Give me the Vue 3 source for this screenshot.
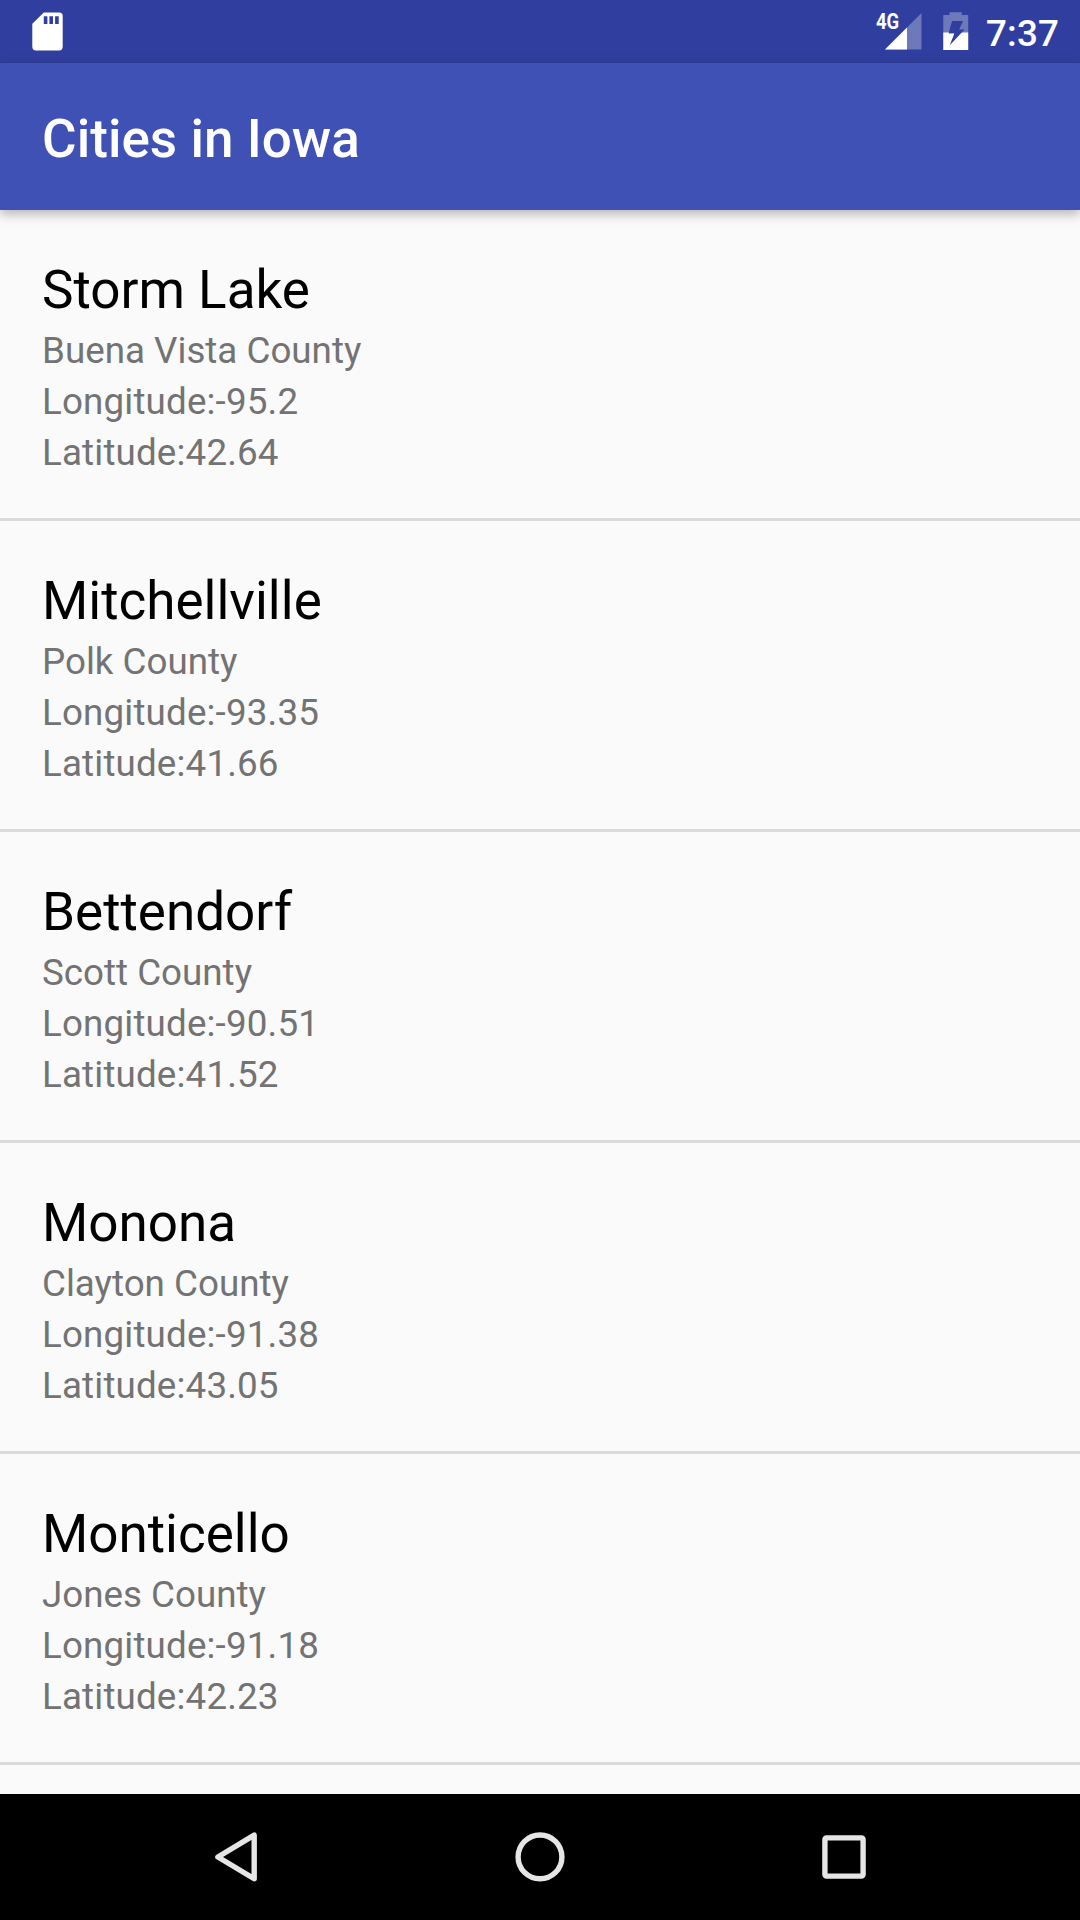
<script setup>
const cities = [
  { name: 'Storm Lake', county: 'Buena Vista County', lon: '-95.2', lat: '42.64' },
  { name: 'Mitchellville', county: 'Polk County', lon: '-93.35', lat: '41.66' },
  { name: 'Bettendorf', county: 'Scott County', lon: '-90.51', lat: '41.52' },
  { name: 'Monona', county: 'Clayton County', lon: '-91.38', lat: '43.05' },
  { name: 'Monticello', county: 'Jones County', lon: '-91.18', lat: '42.23' },
]
</script>

<template>
  <div class="screen">
    <div class="status">
      <svg class="sd" width="32" height="40" viewBox="0 0 32 40">
        <path
          fill="#fff"
          fill-rule="evenodd"
          d="M11.8 .4H27.1Q30.7 .4 30.7 4V34.7Q30.7 38.4 27.1 38.4H4Q.3 38.4 .3 34.7V11.7ZM11.8 4.3V12H15.4V4.3ZM17.4 4.3V12H21V4.3ZM23.1 4.3V12H26.7V4.3Z"
        />
      </svg>
      <div class="right">
        <div class="signal">
          <svg width="37" height="37" viewBox="0 0 37 37">
            <path fill="#fff" fill-opacity=".3" d="M36.5 0V36.5H0Z" />
            <path fill="#fff" d="M22 14.5V36.5H0Z" />
          </svg>
          <span class="net">4G</span>
        </div>
        <svg class="battery" width="26" height="38" viewBox="0 0 26 38">
          <defs>
            <clipPath id="charge"><rect y="20.4" width="26" height="18" /></clipPath>
            <path
              id="cell"
              clip-rule="evenodd"
              fill-rule="evenodd"
              d="M.3 3H6.5V.3H18.8V3H25.2V37.9H.3ZM9 9L5.6 21.6H11.3L6.6 33.6L21.6 17.5H16.2L20 9Z"
            />
          </defs>
          <use href="#cell" fill="#fff" fill-opacity=".3" />
          <use href="#cell" fill="#fff" clip-path="url(#charge)" />
        </svg>
        <span class="clock">7:37</span>
      </div>
    </div>
    <header class="toolbar">Cities in Iowa</header>
    <main class="list">
      <div v-for="c in cities" :key="c.name" class="item">
        <div class="name">{{ c.name }}</div>
        <div class="sub">{{ c.county }}</div>
        <div class="sub coord">Longitude:{{ c.lon }}</div>
        <div class="sub coord">Latitude:{{ c.lat }}</div>
      </div>
    </main>
    <nav class="nav">
      <svg width="50" height="50" viewBox="0 0 50 50">
        <path d="M6.9 25L43.2 3.1V46.7Z" />
      </svg>
      <svg width="50" height="50" viewBox="0 0 50 50"><circle cx="25" cy="24.9" r="21.9" /></svg>
      <svg width="50" height="50" viewBox="0 0 50 50">
        <rect x="5.9" y="5.9" width="38.2" height="38.2" rx="1.5" />
      </svg>
    </nav>
  </div>
</template>

<style>
body {
  margin: 0;
}
</style>

<style scoped>
.screen {
  width: 1080px;
  height: 1920px;
  display: flex;
  flex-direction: column;
  overflow: hidden;
  background: #fafafa;
  font-family: Roboto, sans-serif;
}
.status {
  height: 63px;
  flex: none;
  display: flex;
  justify-content: space-between;
  background: #303f9f;
  color: #fff;
}
.sd {
  margin: 12px 0 0 32px;
}
.right {
  display: flex;
  align-items: flex-start;
  padding-right: 21px;
}
.signal {
  position: relative;
  height: 37px;
  margin-top: 13px;
}
.signal svg,
.battery {
  display: block;
}
.net {
  position: absolute;
  left: -9px;
  top: -2px;
  font-size: 21.5px;
  line-height: 22px;
  font-weight: 700;
  transform: scaleX(0.86);
  transform-origin: 0 0;
}
.battery {
  margin: 12px 0 0 21px;
}
.clock {
  margin: 9px 0 0 17px;
  font-size: 36.75px;
  line-height: 50px;
  font-weight: 500;
  letter-spacing: 0.15px;
}
.toolbar {
  position: relative;
  height: 147px;
  flex: none;
  box-sizing: border-box;
  padding: 45px 42px 0;
  font-size: 53px;
  line-height: 62px;
  font-weight: 500;
  letter-spacing: 0.04px;
  color: #fff;
  background: #3f51b5;
  box-shadow: 0 4px 11px rgba(0, 0, 0, 0.29);
}
.list {
  flex: 1;
  min-height: 0;
  overflow: hidden;
}
.item {
  height: 311px;
  box-sizing: border-box;
  padding: 49px 42px 0;
  border-bottom: 3px solid #dadada;
}
.name {
  font-size: 53px;
  line-height: 62px;
  margin-bottom: 4px;
  color: #000;
}
.sub {
  font-size: 36.75px;
  line-height: 51px;
  color: #737373;
}
.coord {
  letter-spacing: 0.16px;
}
.nav {
  height: 126px;
  flex: none;
  display: flex;
  align-items: center;
  justify-content: center;
  gap: 254px;
  background: #000;
}
.nav svg {
  fill: none;
  stroke: #e6e6e6;
  stroke-width: 5.4;
  stroke-linejoin: round;
}
</style>
